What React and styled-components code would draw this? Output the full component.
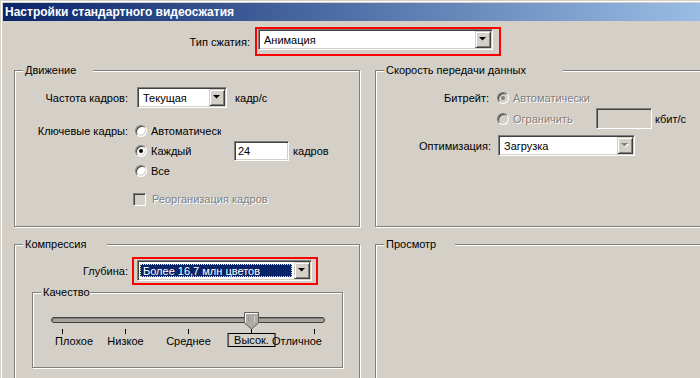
import styled, { createGlobalStyle } from 'styled-components'

const GlobalStyle = createGlobalStyle`
  html, body {
    margin: 0;
    padding: 0;
    background: #d4d0c8;
  }
  body {
    font-family: "Liberation Sans", Arial, sans-serif;
    font-size: 11px;
    color: #000;
  }
  #root {
    width: 700px;
    height: 378px;
    overflow: hidden;
  }
`

const Window = styled.div`
  width: 760px;
  height: 420px;
  box-sizing: border-box;
  border-top: 1px solid #d4d0c8;
  border-left: 1px solid #d4d0c8;
  box-shadow: inset 1px 1px 0 #fff;
  padding: 2px 0 0 2px;
  background: #d4d0c8;
`

const TitleBar = styled.div`
  height: 18px;
  padding-left: 2px;
  background: linear-gradient(to right, #0a246a, #a6caf0);
  color: #fff;
  font-weight: bold;
  font-size: 12px;
  line-height: 18px;
  white-space: nowrap;
`

const Body = styled.div`
  padding: 6px 0 0 11px;
`

const Row = styled.div`
  display: flex;
  align-items: center;
  height: ${p => p.$h || 20}px;
  margin-top: ${p => p.$mt || 0}px;
  padding-left: ${p => p.$pl || 0}px;
  white-space: nowrap;
`

const Label = styled.span`
  flex-shrink: 0;
  width: ${p => p.$w}px;
  margin-right: ${p => p.$gap || 0}px;
  text-align: right;
`

const Text = styled.span`
  margin-left: ${p => p.$ml || 0}px;
  color: ${p => (p.$disabled ? '#808080' : '#000')};
  text-shadow: ${p => (p.$disabled ? '1px 1px 0 #fff' : 'none')};
`

const RedFrame = styled.div`
  display: flex;
  border: 2px solid #f00;
  padding: ${p => p.$pad};
`

const Combo = styled.div`
  box-sizing: border-box;
  display: flex;
  width: ${p => p.$w}px;
  height: 21px;
  border: 1px solid;
  border-color: #808080 #fff #fff #808080;
  box-shadow: inset 1px 1px 0 #404040, inset -1px -1px 0 #d4d0c8;
  padding: 1px;
  background: #fff;
`

const ComboValue = styled.div`
  flex: 1;
  display: flex;
  align-items: center;
  margin: ${p => (p.$selected ? '2px 2px 2px 1px' : '0')};
  padding-left: ${p => (p.$selected ? 3 : 4)}px;
  background: ${p => (p.$selected ? '#0a246a' : 'transparent')};
  color: ${p => (p.$selected ? '#fff' : '#000')};
  outline: ${p => (p.$selected ? '1px dotted #f0e8a0' : 'none')};
  outline-offset: -1px;
`

const DropButton = styled.div`
  box-sizing: border-box;
  width: 16px;
  height: 17px;
  display: flex;
  align-items: center;
  justify-content: center;
  border: 1px solid;
  border-color: #d4d0c8 #404040 #404040 #d4d0c8;
  box-shadow: inset 1px 1px 0 #fff, inset -1px -1px 0 #808080;
  background: #d4d0c8;
`

const ArrowIcon = ({ disabled }) => (
  <svg width="8" height="5" viewBox="0 0 8 5">
    {disabled && <polygon points="1,1 8,1 4.5,4.5" fill="#fff" />}
    <polygon points="0,0 7,0 3.5,3.5" fill={disabled ? '#808080' : '#000'} />
  </svg>
)

const ComboBox = ({ w, value, selected, disabled }) => (
  <Combo $w={w}>
    <ComboValue $selected={selected}>{value}</ComboValue>
    <DropButton>
      <ArrowIcon disabled={disabled} />
    </DropButton>
  </Combo>
)

const Field = styled.div`
  box-sizing: border-box;
  width: ${p => p.$w}px;
  height: ${p => p.$h || 20}px;
  display: flex;
  align-items: center;
  padding-left: 3px;
  margin-left: ${p => p.$ml || 0}px;
  border: 1px solid;
  border-color: #808080 #fff #fff #808080;
  box-shadow: inset 1px 1px 0 #404040, inset -1px -1px 0 #d4d0c8;
  background: ${p => (p.$disabled ? '#d4d0c8' : '#fff')};
`

const RadioItem = styled.div`
  display: flex;
  align-items: center;
  flex-shrink: 0;
  width: ${p => (p.$w ? `${p.$w}px` : 'auto')};
  overflow: hidden;
`

const RadioCircle = styled.span`
  box-sizing: border-box;
  flex-shrink: 0;
  width: 12px;
  height: 12px;
  margin-right: 4px;
  display: flex;
  align-items: center;
  justify-content: center;
  border-radius: 50%;
  border: 1px solid;
  border-color: #808080 #fff #fff #808080;
  box-shadow: inset 1px 1px 0 #404040, inset -1px -1px 0 #d4d0c8;
  background: ${p => (p.$disabled ? '#d4d0c8' : '#fff')};

  &::after {
    content: '';
    width: 4px;
    height: 4px;
    border-radius: 50%;
    background: ${p => (!p.$checked ? 'transparent' : p.$disabled ? '#808080' : '#000')};
  }
`

const Radio = ({ label, checked, disabled, w }) => (
  <RadioItem $w={w}>
    <RadioCircle $checked={checked} $disabled={disabled} />
    <Text $disabled={disabled}>{label}</Text>
  </RadioItem>
)

const CheckBox = styled.span`
  box-sizing: border-box;
  width: 13px;
  height: 13px;
  margin-right: 6px;
  border: 1px solid;
  border-color: #808080 #fff #fff #808080;
  box-shadow: inset 1px 1px 0 #404040, inset -1px -1px 0 #d4d0c8;
  background: ${p => (p.$disabled ? '#d4d0c8' : '#fff')};
`

const Columns = styled.div`
  display: grid;
  grid-template-columns: 346px 360px;
  grid-template-rows: 157px 160px;
  column-gap: 15px;
  row-gap: 17px;
  margin-top: 14px;
`

const Group = styled.div`
  position: relative;
  box-sizing: border-box;
  width: ${p => (p.$w ? `${p.$w}px` : 'auto')};
  height: ${p => (p.$h ? `${p.$h}px` : 'auto')};
  margin: ${p => p.$m || '0'};
  border: 1px solid #808080;
  box-shadow: inset 1px 1px 0 #fff, 1px 1px 0 #fff;
`

const Legend = styled.span`
  position: absolute;
  top: -8px;
  left: 8px;
  box-sizing: border-box;
  width: ${p => p.$w}px;
  padding-left: 2px;
  background: #d4d0c8;
  line-height: 14px;
  white-space: nowrap;
`

const SliderBox = styled.div`
  position: relative;
  width: 274px;
  height: 40px;
  margin: 17px 0 0 18px;
`

const Track = styled.div`
  position: absolute;
  left: 0;
  right: 0;
  top: 7px;
  box-sizing: border-box;
  height: 6px;
  border: 1px solid #404040;
  border-radius: 3px;
  background: #a8a49c;
  box-shadow: inset 1px 1px 0 #808080;
`

const Tick = styled.span`
  position: absolute;
  top: 19px;
  width: 1px;
  height: 5px;
  background: #000;
`

const TickLabel = styled.span`
  position: absolute;
  top: 24px;
  line-height: 14px;
  white-space: nowrap;
  transform: ${p => (p.$align === 'center' ? 'translateX(-50%)' : 'none')};
`

const ValueBox = styled.span`
  position: absolute;
  top: 23px;
  transform: translateX(-50%);
  box-sizing: border-box;
  height: 14px;
  padding: 0 6px;
  border: 1px solid #000;
  line-height: 12px;
  white-space: nowrap;
  background: #d4d0c8;
`

const ThumbWrap = styled.div`
  position: absolute;
  top: 2px;
  width: 15px;
  height: 22px;
`

const Thumb = () => (
  <svg width="15" height="22" viewBox="0 0 15 22">
    <polygon points="0.5,0.5 14.5,0.5 14.5,11 7.5,17 0.5,11" fill="#b0aca4" stroke="#606060" />
    <polyline points="1.5,10.5 1.5,1.5 13.5,1.5" fill="none" stroke="#fff" />
    <line x1="6" y1="4" x2="6" y2="10" stroke="#fff" />
    <line x1="8" y1="4" x2="8" y2="10" stroke="#fff" />
    <line x1="10" y1="4" x2="10" y2="10" stroke="#fff" />
    <line x1="5" y1="4" x2="5" y2="10" stroke="#808080" />
    <line x1="7" y1="4" x2="7" y2="10" stroke="#808080" />
    <line x1="9" y1="4" x2="9" y2="10" stroke="#808080" />
    <line x1="7.5" y1="17" x2="7.5" y2="22" stroke="#000" />
  </svg>
)

const levels = ['Плохое', 'Низкое', 'Среднее', 'Высок.', 'Отличное']
const current = 3
const tickX = i => 11 + i * 63

const QualitySlider = () => (
  <SliderBox>
    <Track />
    {levels.map((l, i) => (
      <Tick key={'t' + i} style={{ left: tickX(i) }} />
    ))}
    {levels.map((l, i) => {
      if (i === current) {
        return (
          <ValueBox key={l} style={{ left: tickX(i) + 0.5 }}>
            {l}
          </ValueBox>
        )
      }
      if (i === 0) return <TickLabel key={l} style={{ left: 4 }}>{l}</TickLabel>
      if (i === levels.length - 1) return <TickLabel key={l} style={{ right: 3 }}>{l}</TickLabel>
      return (
        <TickLabel key={l} $align="center" style={{ left: tickX(i) + 0.5 }}>
          {l}
        </TickLabel>
      )
    })}
    <ThumbWrap style={{ left: tickX(current) - 7 }}>
      <Thumb />
    </ThumbWrap>
  </SliderBox>
)

export default function App() {
  return (
    <>
      <GlobalStyle />
      <Window>
        <TitleBar>Настройки стандартного видеосжатия</TitleBar>
        <Body>
          <Row $h={29}>
            <Label $w={236} $gap={5}>Тип сжатия:</Label>
            <RedFrame $pad="0 6px 4px 1px">
              <ComboBox w={235} value="Анимация" />
            </RedFrame>
          </Row>

          <Columns>
            <Group>
              <Legend $w={70}>Движение</Legend>
              <Row $h={21} $mt={16}>
                <Label $w={113} $gap={9}>Частота кадров:</Label>
                <ComboBox w={90} value="Текущая" />
                <Text $ml={8}>кадр/с</Text>
              </Row>
              <Row $mt={13}>
                <Label $w={113} $gap={7}>Ключевые кадры:</Label>
                <Radio label="Автоматически" w={86} />
              </Row>
              <Row $pl={120}>
                <Radio label="Каждый" checked w={99} />
                <Field $w={55}>24</Field>
                <Text $ml={4}>кадров</Text>
              </Row>
              <Row $pl={120}>
                <Radio label="Все" />
              </Row>
              <Row $mt={8} $pl={118}>
                <CheckBox $disabled />
                <Text $disabled>Реорганизация кадров</Text>
              </Row>
            </Group>

            <Group>
              <Legend $w={179}>Скорость передачи данных</Legend>
              <Row $mt={17}>
                <Label $w={113} $gap={8}>Битрейт:</Label>
                <Radio label="Автоматически" checked disabled />
              </Row>
              <Row $h={21} $pl={121}>
                <Radio label="Ограничить" disabled w={99} />
                <Field $w={56} $h={21} $disabled />
                <Text $ml={3}>кбит/с</Text>
              </Row>
              <Row $h={21} $mt={6}>
                <Label $w={115} $gap={7}>Оптимизация:</Label>
                <ComboBox w={137} value="Загрузка" disabled />
              </Row>
            </Group>

            <Group>
              <Legend $w={84}>Компрессия</Legend>
              <Row $h={30} $mt={11}>
                <Label $w={113} $gap={4}>Глубина:</Label>
                <RedFrame $pad="1px 4px 2px 3px">
                  <ComboBox w={175} value="Более 16,7 млн цветов" selected />
                </RedFrame>
              </Row>
              <Group $w={311} $h={76} $m="6px 0 0 17px">
                <Legend $w={49}>Качество</Legend>
                <QualitySlider />
              </Group>
            </Group>

            <Group>
              <Legend $w={71}>Просмотр</Legend>
            </Group>
          </Columns>
        </Body>
      </Window>
    </>
  )
}
